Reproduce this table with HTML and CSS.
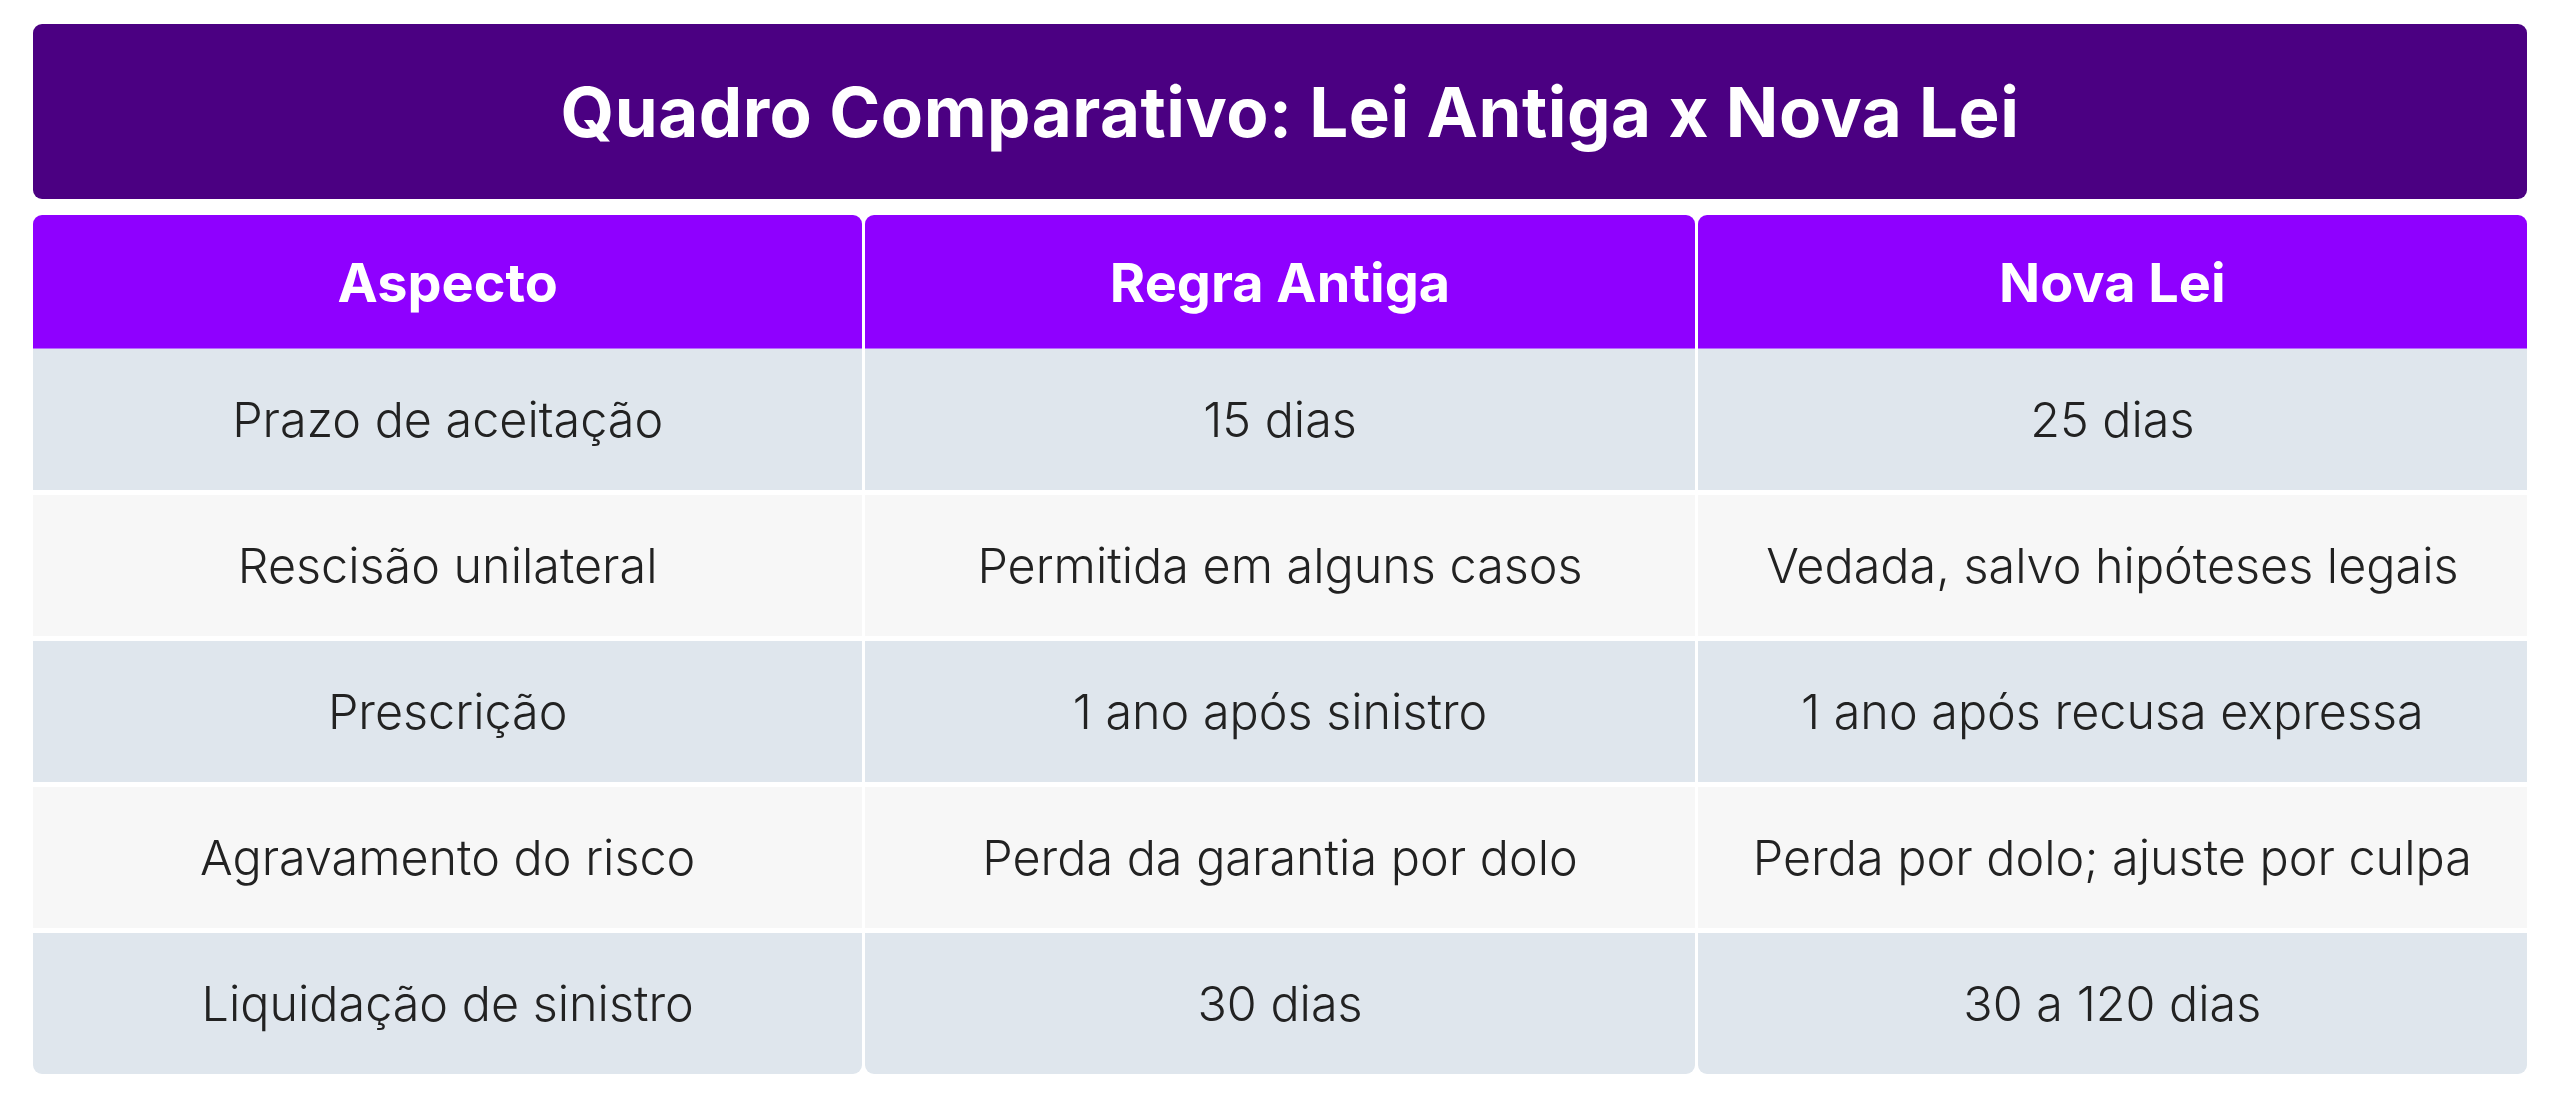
FILE: index.html
```html
<!DOCTYPE html>
<html lang="pt-BR">
<head>
<meta charset="utf-8">
<title>Quadro Comparativo</title>
<link rel="stylesheet" href="styles.css">
</head>
<body>
<div class="page">
  <div class="title-bar">
    <h1 class="title">Quadro Comparativo: Lei Antiga x Nova Lei</h1>
  </div>
  <div class="table">
    <div class="row head">
      <div class="cell th">Aspecto</div>
      <div class="cell th">Regra Antiga</div>
      <div class="cell th">Nova Lei</div>
    </div>
    <div class="body">
      <div class="row odd">
        <div class="cell">Prazo de aceitação</div>
        <div class="cell">15 dias</div>
        <div class="cell">25 dias</div>
      </div>
      <div class="row even">
        <div class="cell">Rescisão unilateral</div>
        <div class="cell">Permitida em alguns casos</div>
        <div class="cell">Vedada, salvo hipóteses legais</div>
      </div>
      <div class="row odd">
        <div class="cell">Prescrição</div>
        <div class="cell">1 ano após sinistro</div>
        <div class="cell">1 ano após recusa expressa</div>
      </div>
      <div class="row even">
        <div class="cell">Agravamento do risco</div>
        <div class="cell">Perda da garantia por dolo</div>
        <div class="cell">Perda por dolo; ajuste por culpa</div>
      </div>
      <div class="row odd last">
        <div class="cell">Liquidação de sinistro</div>
        <div class="cell">30 dias</div>
        <div class="cell">30 a 120 dias</div>
      </div>
    </div>
  </div>
</div>
</body>
</html>
```
FILE: styles.css
```css
* { box-sizing: border-box; }
html, body { margin: 0; padding: 0; background: #ffffff; }
body { font-family: "Inter", "Noto Sans", sans-serif; color: #222222; }

.page {
  padding: 24px 33px;
  display: flex;
  flex-direction: column;
  gap: 16px;
}

.title-bar {
  height: 175px;
  background: #4b0082;
  border-radius: 9px;
  display: flex;
  align-items: center;
  justify-content: center;
  padding-left: 20px;
}
.title {
  margin: 0;
  color: #ffffff;
  font-weight: 700;
  font-size: 69px;
  letter-spacing: 0.5px;
}

.table { display: flex; flex-direction: column; }
.body { display: flex; flex-direction: column; gap: 5px; }

.row {
  display: grid;
  grid-template-columns: repeat(3, 1fr);
  column-gap: 3px;
}

.cell {
  height: 141px;
  display: flex;
  align-items: center;
  justify-content: center;
  text-align: center;
  font-size: 48.5px;
  font-weight: 300;
}

.head .cell {
  height: 134px;
  background: #8f00ff;
  color: #ffffff;
  font-weight: 700;
  font-size: 54px;
  border-radius: 9px 9px 0 0;
  box-shadow: inset 0 -1px 0 #b76cff;
}

.odd .cell { background: #dfe6ed; }
.even .cell { background: #f7f7f7; }
.last .cell { border-radius: 0 0 9px 9px; }
```
